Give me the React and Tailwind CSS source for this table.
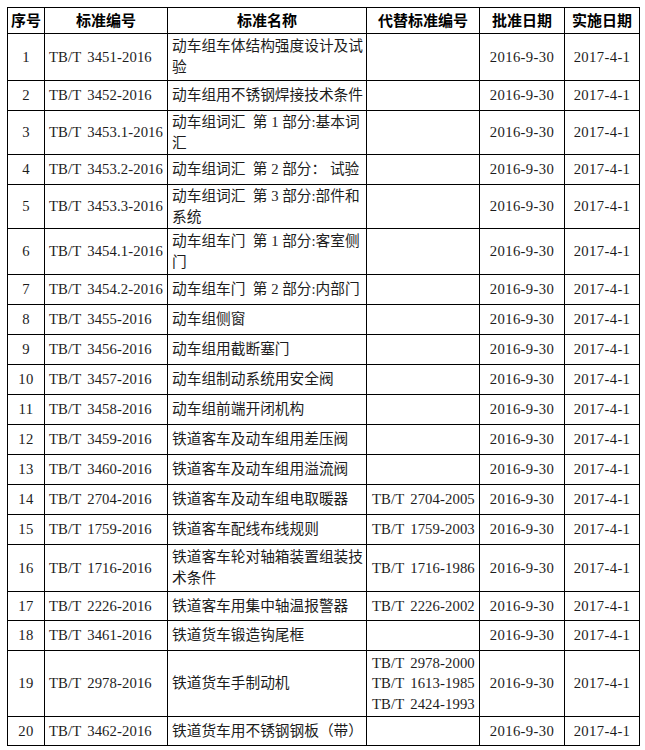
const rows = [
  { no: 1, code: "TB/T 3451-2016", name: ["动车组车体结构强度设计及试", "验"], rep: [], h: "h-[47px]" },
  { no: 2, code: "TB/T 3452-2016", name: ["动车组用不锈钢焊接技术条件"], rep: [], h: "h-[30px]" },
  { no: 3, code: "TB/T 3453.1-2016", name: ["动车组词汇\u00a0 第 1 部分:基本词", "汇"], rep: [], h: "h-[44px]" },
  { no: 4, code: "TB/T 3453.2-2016", name: ["动车组词汇\u00a0 第 2 部分： 试验"], rep: [], h: "h-[30px]" },
  { no: 5, code: "TB/T 3453.3-2016", name: ["动车组词汇\u00a0 第 3 部分:部件和", "系统"], rep: [], h: "h-[44px]" },
  { no: 6, code: "TB/T 3454.1-2016", name: ["动车组车门\u00a0 第 1 部分:客室侧", "门"], rep: [], h: "h-[46px]" },
  { no: 7, code: "TB/T 3454.2-2016", name: ["动车组车门\u00a0 第 2 部分:内部门"], rep: [], h: "h-[30px]" },
  { no: 8, code: "TB/T 3455-2016", name: ["动车组侧窗"], rep: [], h: "h-[30px]" },
  { no: 9, code: "TB/T 3456-2016", name: ["动车组用截断塞门"], rep: [], h: "h-[30px]" },
  { no: 10, code: "TB/T 3457-2016", name: ["动车组制动系统用安全阀"], rep: [], h: "h-[30px]" },
  { no: 11, code: "TB/T 3458-2016", name: ["动车组前端开闭机构"], rep: [], h: "h-[30px]" },
  { no: 12, code: "TB/T 3459-2016", name: ["铁道客车及动车组用差压阀"], rep: [], h: "h-[30px]" },
  { no: 13, code: "TB/T 3460-2016", name: ["铁道客车及动车组用溢流阀"], rep: [], h: "h-[30px]" },
  { no: 14, code: "TB/T 2704-2016", name: ["铁道客车及动车组电取暖器"], rep: ["TB/T 2704-2005"], h: "h-[30px]" },
  { no: 15, code: "TB/T 1759-2016", name: ["铁道客车配线布线规则"], rep: ["TB/T 1759-2003"], h: "h-[30px]" },
  { no: 16, code: "TB/T 1716-2016", name: ["铁道客车轮对轴箱装置组装技", "术条件"], rep: ["TB/T 1716-1986"], h: "h-[47px]" },
  { no: 17, code: "TB/T 2226-2016", name: ["铁道客车用集中轴温报警器"], rep: ["TB/T 2226-2002"], h: "h-[29px]" },
  { no: 18, code: "TB/T 3461-2016", name: ["铁道货车锻造钩尾框"], rep: [], h: "h-[30px]" },
  {
    no: 19,
    code: "TB/T 2978-2016",
    name: ["铁道货车手制动机"],
    rep: ["TB/T 2978-2000", "TB/T 1613-1985", "TB/T 2424-1993"],
    h: "h-[66px]",
  },
  { no: 20, code: "TB/T 3462-2016", name: ["铁道货车用不锈钢钢板（带）"], rep: [], h: "h-[29px]" },
];

function Lines({ lines }) {
  return lines.map((line, i) => (
    <div key={i} className="whitespace-pre">
      {line}
    </div>
  ));
}

export default function App() {
  const cell = "border border-black align-middle p-0";
  const code = "tracking-[0.1px] [word-spacing:2.5px] whitespace-nowrap";
  const head = "border border-black h-[26px] p-0 text-center font-bold text-[15px] text-black tracking-normal font-['Noto_Sans_CJK_SC',sans-serif]";

  return (
    <div className="min-h-screen bg-white pl-[7px] pt-[7px]">
      <table className="table-fixed border-collapse w-[632px] text-[14.7px] text-[#1c1c1c] font-['Liberation_Serif','Noto_Sans_CJK_SC',serif] tracking-[0.35px]">
        <colgroup>
          <col className="w-[37px]" />
          <col className="w-[123px]" />
          <col className="w-[199px]" />
          <col className="w-[113px]" />
          <col className="w-[85px]" />
          <col className="w-[75px]" />
        </colgroup>
        <thead>
          <tr>
            <th className={head}>序号</th>
            <th className={head}>标准编号</th>
            <th className={head}>标准名称</th>
            <th className={head}>代替标准编号</th>
            <th className={head}>批准日期</th>
            <th className={head}>实施日期</th>
          </tr>
        </thead>
        <tbody>
          {rows.map((row) => (
            <tr key={row.no} className={row.h}>
              <td className={`${cell} text-center`}>{row.no}</td>
              <td className={`${cell} pl-[4px] ${code}`}>{row.code}</td>
              <td className={`${cell} pl-[4px] leading-[21px] tracking-normal`}>
                <Lines lines={row.name} />
              </td>
              <td className={`${cell} pl-[5px] leading-[20.5px] ${code}`}>
                <Lines lines={row.rep} />
              </td>
              <td className={`${cell} text-center`}>2016-9-30</td>
              <td className={`${cell} text-center`}>2017-4-1</td>
            </tr>
          ))}
        </tbody>
      </table>
    </div>
  );
}
